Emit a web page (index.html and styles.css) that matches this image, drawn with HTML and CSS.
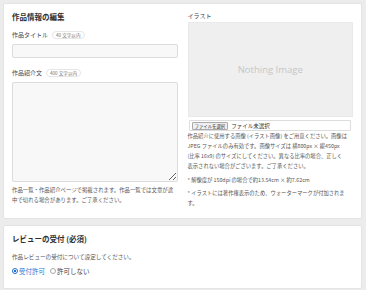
FILE: index.html
```html
<!DOCTYPE html>
<html lang="ja">

<head>
  <meta charset="UTF-8">
  <meta name="viewport" content="width=device-width, initial-scale=1.0">
  <title>作品情報の編集</title>
  <link rel="stylesheet" href="styles.css">
</head>

<body>
  <div class="page">
    <div class="card">
      <div class="columns">
        <div class="col-left">
          <h2 class="card-title">作品情報の編集</h2>
          <div class="field">
            <div class="label-row">
              <span class="label">作品タイトル</span>
              <span class="badge">40 文字以内</span>
            </div>
            <input type="text" class="text-input">
          </div>
          <div class="field">
            <div class="label-row">
              <span class="label">作品紹介文</span>
              <span class="badge">400 文字以内</span>
            </div>
            <textarea class="text-area"></textarea>
            <p class="help">作品一覧・作品紹介ページで掲載されます。作品一覧では文章が途中で切れる場合があります。ご了承ください。</p>
          </div>
        </div>
        <div class="col-right">
          <div class="label">イラスト</div>
          <div class="no-image">Nothing Image</div>
          <div class="file-box">
            <span class="file-btn">ファイルを選択</span>
            <span class="file-name">ファイル未選択</span>
          </div>
          <p class="note">作品紹介に使用する画像 (イラスト画像) をご用意ください。画像は<br>JPEG ファイルのみ有効です。画像サイズは 横800px × 縦450px<br>(比率 16x9) のサイズにしてください。異なる比率の場合、正しく<br>表示されない場合がございます。ご了承ください。</p>
          <p class="note small-gap">* 解像度が 150dpi の場合で約13.54cm × 約7.62cm</p>
          <p class="note tight">* イラストには著作権表示のため、ウォーターマークが付加されま<br>す。</p>
        </div>
      </div>
    </div>

    <div class="card card-review">
      <h2 class="card-title">レビューの受付 (必須)</h2>
      <p class="desc">作品レビューの受付について設定してください。</p>
      <div class="radios">
        <label class="radio checked"><span class="dot"></span>受付許可</label>
        <label class="radio"><span class="dot"></span>許可しない</label>
      </div>
    </div>
  </div>
</body>

</html>
```

FILE: styles.css
```css
body {
  margin: 0;
  padding: 0;
  background-color: #ececec;
  font-family: "Noto Sans CJK JP", "Noto Sans", sans-serif;
  font-size: 6px;
  line-height: 10px;
  color: #555;
}

.page {
  display: flex;
  flex-direction: column;
  gap: 6px;
  padding: 3px 4px 3px 3px;
}

.card {
  background-color: #fff;
  border: 1px solid #e4e4e4;
  border-radius: 2px;
  padding: 7px 8px 10px 8px;
}

.card-review {
  padding-bottom: 12px;
}

.columns {
  display: grid;
  grid-template-columns: 1fr 1fr;
  column-gap: 10px;
  align-items: start;
}

.card-title {
  margin: 0;
  font-size: 7.5px;
  line-height: 12px;
  font-weight: bold;
  color: #2f2f2f;
}

.field {
  margin-top: 7px;
}

.field + .field {
  margin-top: 10px;
}

.label-row {
  display: flex;
  align-items: center;
  gap: 4px;
  height: 10px;
}

.label {
  font-size: 6px;
  line-height: 10px;
  color: #444;
}

.badge {
  font-size: 4.6px;
  line-height: 6px;
  padding: 0 3px;
  border: 1px solid #e6e6e6;
  border-radius: 4px;
  color: #777;
}

.text-input {
  display: block;
  box-sizing: border-box;
  width: 100%;
  height: 14px;
  margin: 4px 0 0;
  padding: 0;
  border: 1px solid #dcdcdc;
  border-radius: 2px;
  background-color: #f8f8f8;
}

.text-area {
  display: block;
  box-sizing: border-box;
  width: 100%;
  height: 100px;
  margin: 4px 0 0;
  padding: 0;
  border: 1px solid #dcdcdc;
  border-radius: 2px;
  background-color: #f8f8f8;
  resize: vertical;
}

.help {
  margin: 3px 0 0;
  font-size: 5.4px;
  line-height: 10px;
  color: #555;
}

.col-right .label {
  line-height: 9px;
}

.no-image {
  display: flex;
  justify-content: center;
  align-items: center;
  height: 95px;
  margin-top: 2px;
  background-color: #efefef;
  border: 1px solid #e9e9e9;
  box-sizing: border-box;
  font-family: "Open Sans", sans-serif;
  font-size: 9.5px;
  color: #c6c6c6;
}

.file-box {
  display: flex;
  align-items: center;
  gap: 3px;
  box-sizing: border-box;
  height: 11px;
  margin: 3px 2px 0 1px;
  padding: 0 2px;
  border: 1px solid #dcdcdc;
  border-radius: 1px;
}

.file-btn {
  font-size: 4.4px;
  line-height: 6px;
  padding: 0 2px;
  border: 1px solid #aaa;
  border-radius: 1px;
  background-color: #f0f0f0;
  color: #333;
}

.file-name {
  font-size: 5.5px;
  color: #333;
}

.note {
  margin: 0;
  font-size: 5.3px;
  line-height: 10px;
  white-space: nowrap;
  color: #555;
}

.small-gap {
  margin-top: 4px;
}

.tight {
  margin-top: 3px;
}

.desc {
  margin: 7px 0 0;
  font-size: 5.6px;
  line-height: 10px;
  color: #555;
}

.radios {
  display: flex;
  gap: 5px;
  margin-top: 4px;
}

.radio {
  display: flex;
  align-items: center;
  gap: 1px;
  font-size: 6.5px;
  line-height: 10px;
  color: #444;
}

.dot {
  display: inline-block;
  box-sizing: border-box;
  width: 6px;
  height: 6px;
  border: 1px solid #aaa;
  border-radius: 50%;
  background-color: #fff;
}

.radio.checked {
  color: #2b78d6;
}

.radio.checked .dot {
  border: 1.5px solid #1f6fd6;
  background: radial-gradient(circle, #1f6fd6 45%, #fff 50%);
}
```
